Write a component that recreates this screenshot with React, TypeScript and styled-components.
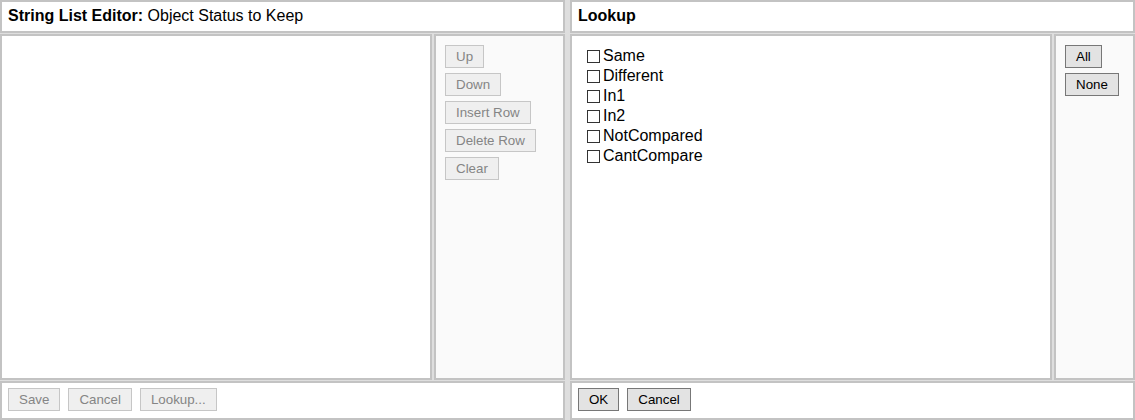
import React from "react";
import styled, { createGlobalStyle } from "styled-components";

const Global = createGlobalStyle`
  html, body {
    margin: 0;
    padding: 0;
    background: #dedede;
    font-family: "Liberation Sans", Arial, sans-serif;
  }
`;

const Page = styled.div`
  display: grid;
  grid-template-columns: 565px 565px;
  column-gap: 5px;
  width: 1135px;
  height: 420px;
  background: #dedede;
`;

const Panel = styled.div`
  display: flex;
  flex-direction: column;
  gap: 1px;
  min-height: 0;
`;

const Box = styled.div`
  box-sizing: border-box;
  border: 2px solid #c3c3c3;
  background: #fff;
`;

const Header = styled(Box)`
  height: 33px;
  padding: 4px 6px 0;
  font-size: 16px;
  color: #000;
  line-height: 20px;
  b {
    font-weight: bold;
  }
`;

const Body = styled.div`
  flex: 1;
  display: flex;
  gap: 2px;
  min-height: 0;
`;

const Main = styled(Box)`
  flex: 1;
  padding: 10px 15px;
`;

const Side = styled(Box)<{ $w: number }>`
  width: ${(p) => p.$w}px;
  background: #fafafa;
  padding: 9px 9px;
  display: flex;
  flex-direction: column;
  align-items: flex-start;
  gap: 5px;
`;

const Footer = styled(Box)`
  height: 39px;
  padding: 5px 6px;
  display: flex;
  gap: 8px;
  align-items: flex-start;
`;

const Btn = styled.button<{ $off?: boolean }>`
  box-sizing: border-box;
  height: 23px;
  padding: 0 10px;
  font-family: "Liberation Sans", Arial, sans-serif;
  font-size: 13.33px;
  line-height: 21px;
  color: ${(p) => (p.$off ? "#858585" : "#000")};
  background: ${(p) => (p.$off ? "#efefef" : "#e3e3e3")};
  border: 1px solid ${(p) => (p.$off ? "#c6c6c6" : "#777")};
  border-radius: 0;
  margin: 0;
`;

const CheckRow = styled.label`
  display: flex;
  align-items: center;
  height: 20px;
  font-size: 16px;
  color: #000;
`;

const Square = styled.span`
  box-sizing: border-box;
  width: 13px;
  height: 13px;
  border: 1px solid #333;
  background: #fff;
  margin-right: 3px;
`;

const items = ["Same", "Different", "In1", "In2", "NotCompared", "CantCompare"];

export default function App() {
  return (
    <>
      <Global />
      <Page>
        <Panel>
          <Header>
            <b>String List Editor:</b> Object Status to Keep
          </Header>
          <Body>
            <Main />
            <Side $w={131}>
              <Btn $off>Up</Btn>
              <Btn $off>Down</Btn>
              <Btn $off>Insert Row</Btn>
              <Btn $off>Delete Row</Btn>
              <Btn $off>Clear</Btn>
            </Side>
          </Body>
          <Footer>
            <Btn $off>Save</Btn>
            <Btn $off>Cancel</Btn>
            <Btn $off>Lookup...</Btn>
          </Footer>
        </Panel>
        <Panel>
          <Header>
            <b>Lookup</b>
          </Header>
          <Body>
            <Main>
              {items.map((it) => (
                <CheckRow key={it}>
                  <Square />
                  {it}
                </CheckRow>
              ))}
            </Main>
            <Side $w={81}>
              <Btn>All</Btn>
              <Btn>None</Btn>
            </Side>
          </Body>
          <Footer>
            <Btn>OK</Btn>
            <Btn>Cancel</Btn>
          </Footer>
        </Panel>
      </Page>
    </>
  );
}
